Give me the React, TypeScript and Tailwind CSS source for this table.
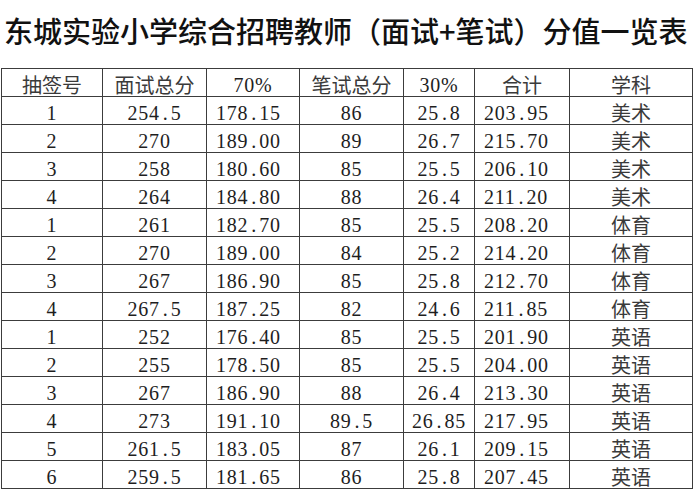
import React from "react";

const rows: string[][] = [
  ["1", "254.5", "178.15", "86", "25.8", "203.95", "美术"],
  ["2", "270", "189.00", "89", "26.7", "215.70", "美术"],
  ["3", "258", "180.60", "85", "25.5", "206.10", "美术"],
  ["4", "264", "184.80", "88", "26.4", "211.20", "美术"],
  ["1", "261", "182.70", "85", "25.5", "208.20", "体育"],
  ["2", "270", "189.00", "84", "25.2", "214.20", "体育"],
  ["3", "267", "186.90", "85", "25.8", "212.70", "体育"],
  ["4", "267.5", "187.25", "82", "24.6", "211.85", "体育"],
  ["1", "252", "176.40", "85", "25.5", "201.90", "英语"],
  ["2", "255", "178.50", "85", "25.5", "204.00", "英语"],
  ["3", "267", "186.90", "88", "26.4", "213.30", "英语"],
  ["4", "273", "191.10", "89.5", "26.85", "217.95", "英语"],
  ["5", "261.5", "183.05", "87", "26.1", "209.15", "英语"],
  ["6", "259.5", "181.65", "86", "25.8", "207.45", "英语"],
];

const cjk = "font-['Noto_Sans_CJK_SC',sans-serif] text-[20px] text-[#3a3a3a]";
const num = "font-['Liberation_Serif','Noto_Sans_CJK_SC',serif] text-[20px] tracking-[0.8px] text-[#1e1e1e]";

function Num({ v }: { v: string }) {
  const parts = v.split(".");
  if (parts.length === 1) return <>{v}</>;
  return (
    <>
      {parts[0]}
      <span className="inline-block w-[10.8px] text-center tracking-normal">.</span>
      {parts[1]}
    </>
  );
}

function Cell({ children, kind, align }: { children: React.ReactNode; kind: "cjk" | "num"; align?: "left" | "center" }) {
  return (
    <div
      className={`h-[28px] border-r border-b border-[#3c3c3c] flex items-center leading-none pt-[4px] ${
        align === "left" ? "justify-start pl-[9px]" : "justify-center"
      } ${kind === "cjk" ? cjk : num}`}
    >
      {children}
    </div>
  );
}

export default function App() {
  return (
    <div className="w-[694px] h-[500px] bg-white overflow-hidden">
      <div className="h-[68px] pt-[16px] pl-[4px] font-['Noto_Sans_CJK_SC',sans-serif] text-[29px] leading-[29px] text-[#111] font-medium whitespace-nowrap">
        东城实验小学综合招聘教师（面试+笔试）分值一览表
      </div>
      <div className="ml-[1px] w-[692px] grid grid-cols-[101px_104px_93px_104px_71px_95px_123px] border-l border-t border-[#3c3c3c]">
        <Cell kind="cjk">抽签号</Cell>
        <Cell kind="cjk">面试总分</Cell>
        <Cell kind="num">70%</Cell>
        <Cell kind="cjk">笔试总分</Cell>
        <Cell kind="num">30%</Cell>
        <Cell kind="cjk">合计</Cell>
        <Cell kind="cjk">学科</Cell>
        {rows.map((r, i) => (
          <React.Fragment key={i}>
            <Cell kind="num"><Num v={r[0]} /></Cell>
            <Cell kind="num"><Num v={r[1]} /></Cell>
            <Cell kind="num" align="left"><Num v={r[2]} /></Cell>
            <Cell kind="num"><Num v={r[3]} /></Cell>
            <Cell kind="num"><Num v={r[4]} /></Cell>
            <Cell kind="num" align="left"><Num v={r[5]} /></Cell>
            <Cell kind="cjk">{r[6]}</Cell>
          </React.Fragment>
        ))}
      </div>
    </div>
  );
}
